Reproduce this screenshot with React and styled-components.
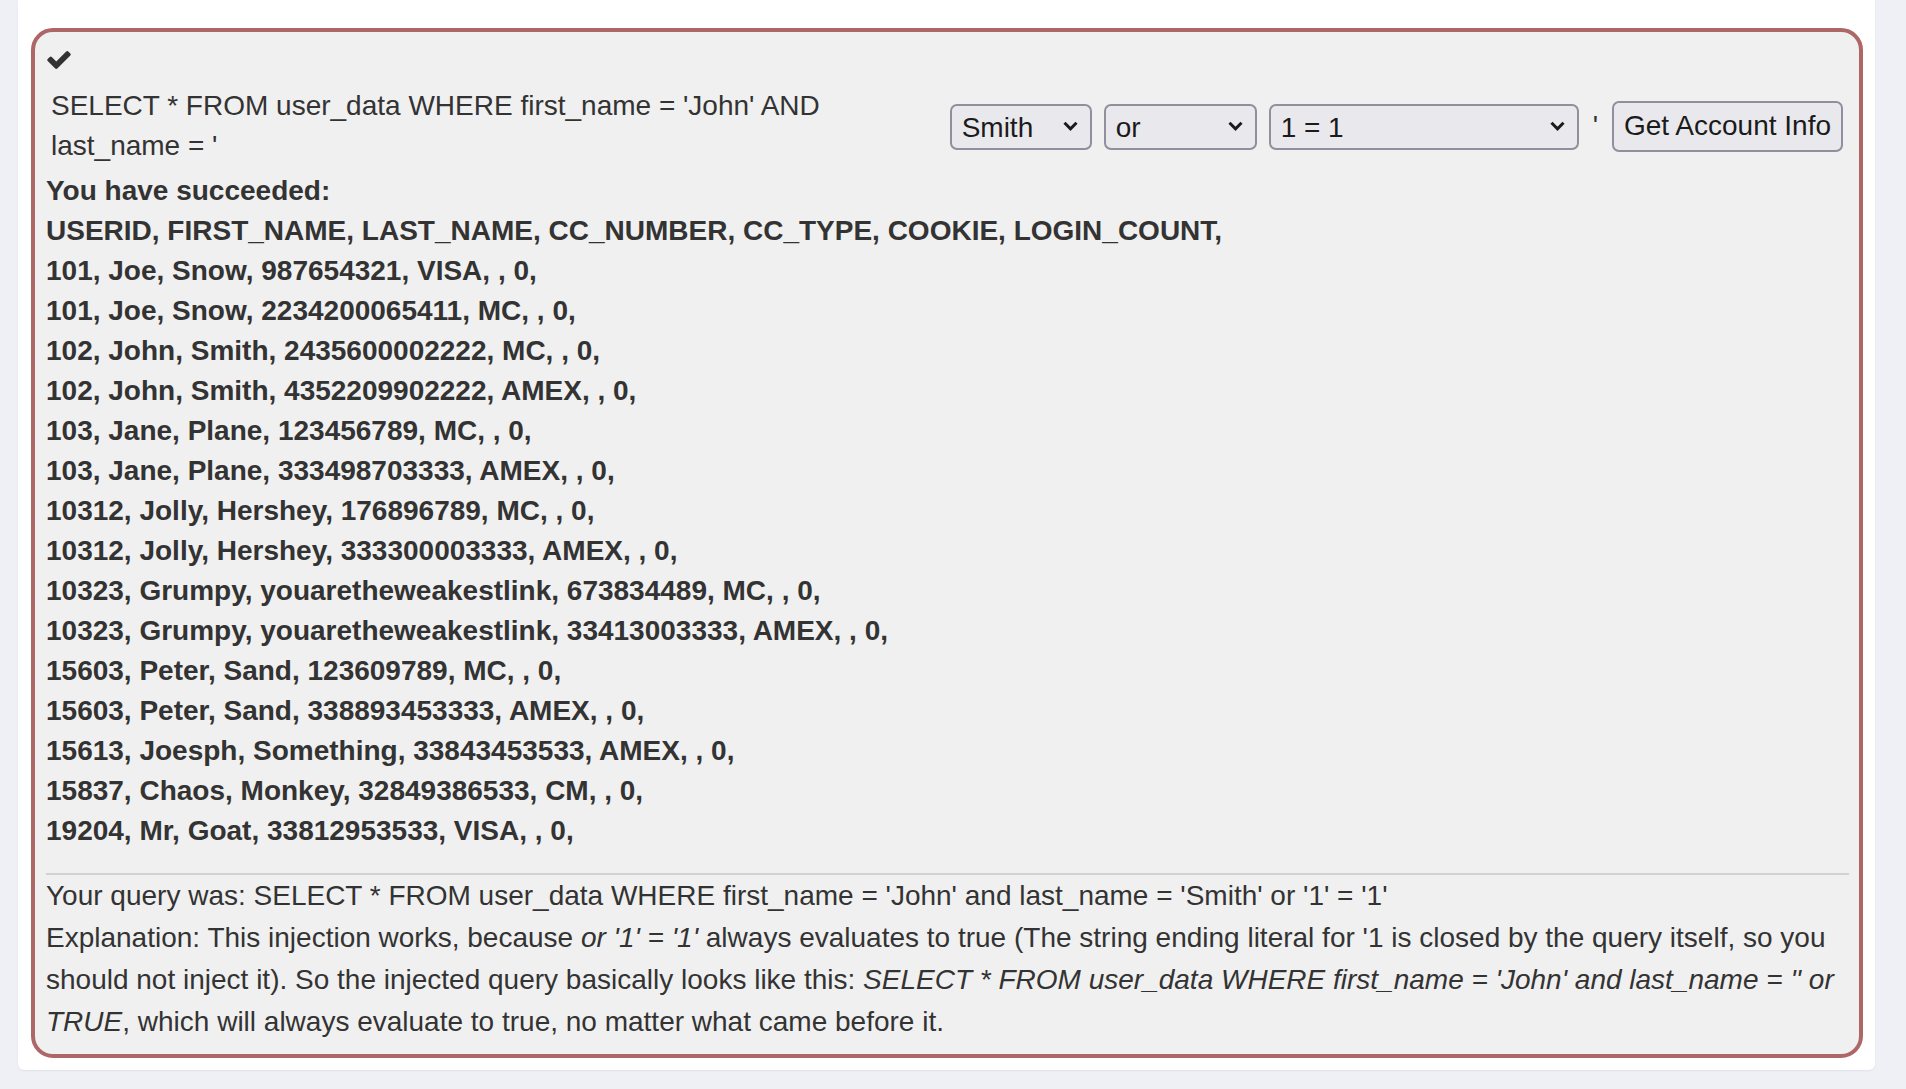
import React from "react";
import styled, { createGlobalStyle } from "styled-components";

const colors = {
  page: "#eff0f5",
  panel: "#ffffff",
  box: "#f0f0f0",
  border: "#ae6767",
  text: "#333333",
  control: "#e9e9ed",
  controlBorder: "#8f8f9d",
  rule: "#d2d2d2"
};

const GlobalStyle = createGlobalStyle`
  html, body {
    margin: 0;
    padding: 0;
    background: ${colors.page};
  }
  body {
    font-family: "Liberation Sans", Arial, sans-serif;
    color: ${colors.text};
  }
`;

const Panel = styled.div`
  margin: 0 31px 18px 18px;
  padding: 28px 12px 12px 13px;
  background: ${colors.panel};
  border-radius: 0 0 6px 6px;
  box-shadow: 0 1px 2px rgba(0, 0, 0, 0.06);
`;

const AttackBox = styled.div`
  background: ${colors.box};
  border: 4px solid ${colors.border};
  border-radius: 22px;
  padding: 9px 10px 11px 11px;
  font-size: 28px;
`;

const CheckRow = styled.div`
  box-sizing: border-box;
  height: 40px;
  padding: 10px 0 0 1px;
  svg {
    display: block;
  }
`;

const FormRow = styled.form`
  display: flex;
  align-items: center;
  padding: 5px 0;
`;

const QueryCell = styled.div`
  flex: 1;
  padding: 0 6px 0 5px;
  line-height: 40px;
`;

const Cell = styled.div`
  padding: 0 6px;
  display: flex;
  align-items: center;
  line-height: 40px;
`;

const SelectWrap = styled.div`
  position: relative;
  width: ${props => props.$width}px;
  height: 46px;
  margin-top: 2px;
`;

const Select = styled.select`
  appearance: none;
  width: 100%;
  height: 100%;
  margin: 0;
  padding: 0 30px 0 10px;
  font-family: "Liberation Sans", Arial, sans-serif;
  font-size: 28px;
  color: #1b1b1b;
  background: ${colors.control};
  border: 2px solid ${colors.controlBorder};
  border-radius: 7px;
`;

const Chevron = styled.svg`
  position: absolute;
  right: 14px;
  top: 17px;
  pointer-events: none;
`;

const Quote = styled.span`
  padding: 0 2px;
`;

const SubmitButton = styled.button`
  height: 51px;
  width: 231px;
  margin: 0;
  padding: 0 8px;
  font-family: "Liberation Sans", Arial, sans-serif;
  font-size: 28px;
  color: #1b1b1b;
  background: ${colors.control};
  border: 2px solid ${colors.controlBorder};
  border-radius: 7px;
`;

const Results = styled.div`
  font-weight: bold;
  line-height: 40px;
`;

const Rule = styled.hr`
  margin: 22px 0 0;
  border: 0;
  border-top: 2px solid ${colors.rule};
`;

const Feedback = styled.div`
  line-height: 42px;
`;

const rows = [
  "USERID, FIRST_NAME, LAST_NAME, CC_NUMBER, CC_TYPE, COOKIE, LOGIN_COUNT,",
  "101, Joe, Snow, 987654321, VISA, , 0,",
  "101, Joe, Snow, 2234200065411, MC, , 0,",
  "102, John, Smith, 2435600002222, MC, , 0,",
  "102, John, Smith, 4352209902222, AMEX, , 0,",
  "103, Jane, Plane, 123456789, MC, , 0,",
  "103, Jane, Plane, 333498703333, AMEX, , 0,",
  "10312, Jolly, Hershey, 176896789, MC, , 0,",
  "10312, Jolly, Hershey, 333300003333, AMEX, , 0,",
  "10323, Grumpy, youaretheweakestlink, 673834489, MC, , 0,",
  "10323, Grumpy, youaretheweakestlink, 33413003333, AMEX, , 0,",
  "15603, Peter, Sand, 123609789, MC, , 0,",
  "15603, Peter, Sand, 338893453333, AMEX, , 0,",
  "15613, Joesph, Something, 33843453533, AMEX, , 0,",
  "15837, Chaos, Monkey, 32849386533, CM, , 0,",
  "19204, Mr, Goat, 33812953533, VISA, , 0,"
];

const Check = () => (
  <svg width="24" height="18" viewBox="121 334 1550 1188">
    <path
      fill="#333"
      d="M1671 566q0 40-28 68l-724 724-136 136q-28 28-68 28t-68-28l-136-136-362-362q-28-28-28-68t28-68l136-136q28-28 68-28t68 28l294 295 656-657q28-28 68-28t68 28l136 136q28 28 28 68z"
    />
  </svg>
);

const Dropdown = ({ width, options }) => (
  <Cell>
    <SelectWrap $width={width}>
      <Select defaultValue={options[0]}>
        {options.map(o => (
          <option key={o}>{o}</option>
        ))}
      </Select>
      <Chevron width="15" height="10" viewBox="0 0 15 10">
        <path d="M1.5 1.8 L7.5 7.8 L13.5 1.8" fill="none" stroke="#1b1b1b" strokeWidth="3" />
      </Chevron>
    </SelectWrap>
  </Cell>
);

export default function App() {
  return (
    <>
      <GlobalStyle />
      <Panel>
        <AttackBox>
          <CheckRow>
            <Check />
          </CheckRow>
          <FormRow onSubmit={e => e.preventDefault()}>
            <QueryCell>
              SELECT * FROM user_data WHERE first_name = 'John' AND last_name = '
            </QueryCell>
            <Dropdown width={142} options={["Smith", "'", "Smith'"]} />
            <Dropdown width={153} options={["or", "and"]} />
            <Dropdown width={310} options={["1 = 1", "'1' = '1'", "'1' = '2'"]} />
            <Cell>
              <Quote>'</Quote>
            </Cell>
            <Cell>
              <SubmitButton type="submit">Get Account Info</SubmitButton>
            </Cell>
          </FormRow>
          <Results>
            You have succeeded:
            {rows.map(r => (
              <div key={r}>{r}</div>
            ))}
          </Results>
          <Rule />
          <Feedback>
            Your query was: SELECT * FROM user_data WHERE first_name = 'John' and last_name =
            'Smith' or '1' = '1'
            <br />
            Explanation: This injection works, because <i>or '1' = '1'</i> always evaluates to
            true (The string ending literal for '1 is closed by the query itself, so you should
            not inject it). So the injected query basically looks like this:{" "}
            <i>SELECT * FROM user_data WHERE first_name = 'John' and last_name = '' or TRUE</i>,
            which will always evaluate to true, no matter what came before it.
          </Feedback>
        </AttackBox>
      </Panel>
    </>
  );
}
